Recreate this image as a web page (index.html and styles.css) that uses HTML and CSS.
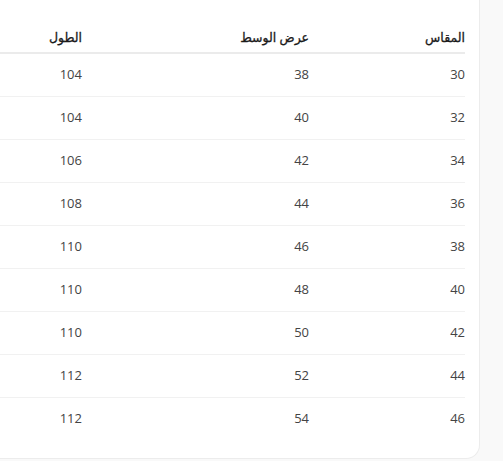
FILE: index.html
```html
<!DOCTYPE html>
<html lang="ar" dir="rtl">
<head>
<meta charset="utf-8">
<link rel="stylesheet" href="styles.css">
</head>
<body>
<div class="card">
  <table class="sizes">
    <colgroup>
      <col class="c1"><col class="c2"><col class="c3">
    </colgroup>
    <thead>
      <tr><th>المقاس</th><th>عرض الوسط</th><th>الطول</th></tr>
    </thead>
    <tbody>
      <tr><td>30</td><td>38</td><td>104</td></tr>
      <tr><td>32</td><td>40</td><td>104</td></tr>
      <tr><td>34</td><td>42</td><td>106</td></tr>
      <tr><td>36</td><td>44</td><td>108</td></tr>
      <tr><td>38</td><td>46</td><td>110</td></tr>
      <tr><td>40</td><td>48</td><td>110</td></tr>
      <tr><td>42</td><td>50</td><td>110</td></tr>
      <tr><td>44</td><td>52</td><td>112</td></tr>
      <tr><td>46</td><td>54</td><td>112</td></tr>
    </tbody>
  </table>
</div>
</body>
</html>
```
FILE: styles.css
```css
html, body {
  margin: 0;
  padding: 0;
  background: #f9f9f9;
}
body {
  direction: rtl;
  font-family: "Open Sans", "DejaVu Sans", sans-serif;
  overflow: hidden;
  width: 503px;
  height: 461px;
}
.card {
  width: 465px;
  margin-right: 23px;
  margin-top: -10px;
  background: #ffffff;
  border-right: 1px solid #ececec;
  border-bottom: 1px solid #ececec;
  border-radius: 0 0 14px 0;
  padding: 33px 14px 18px 0;
  overflow: hidden;
}
.sizes {
  width: 546px;
  border-collapse: collapse;
  table-layout: fixed;
}
.c1 { width: 156px; }
.c2 { width: 227px; }
.c3 { width: 163px; }
.sizes th {
  height: 28px;
  padding: 0 0 1px 0;
  text-align: right;
  vertical-align: middle;
  font-size: 12.5px;
  font-weight: normal;
  color: #1a1a1a;
  -webkit-text-stroke: 0.3px #1a1a1a;
  border-bottom: 2px solid #ebebeb;
}
.sizes td {
  height: 40px;
  padding: 0 0 2px 0;
  text-align: right;
  vertical-align: middle;
  font-size: 13px;
  color: #444444;
  border-bottom: 1px solid #f1f1f1;
}
.sizes tbody tr:last-child td {
  border-bottom: none;
}
```
